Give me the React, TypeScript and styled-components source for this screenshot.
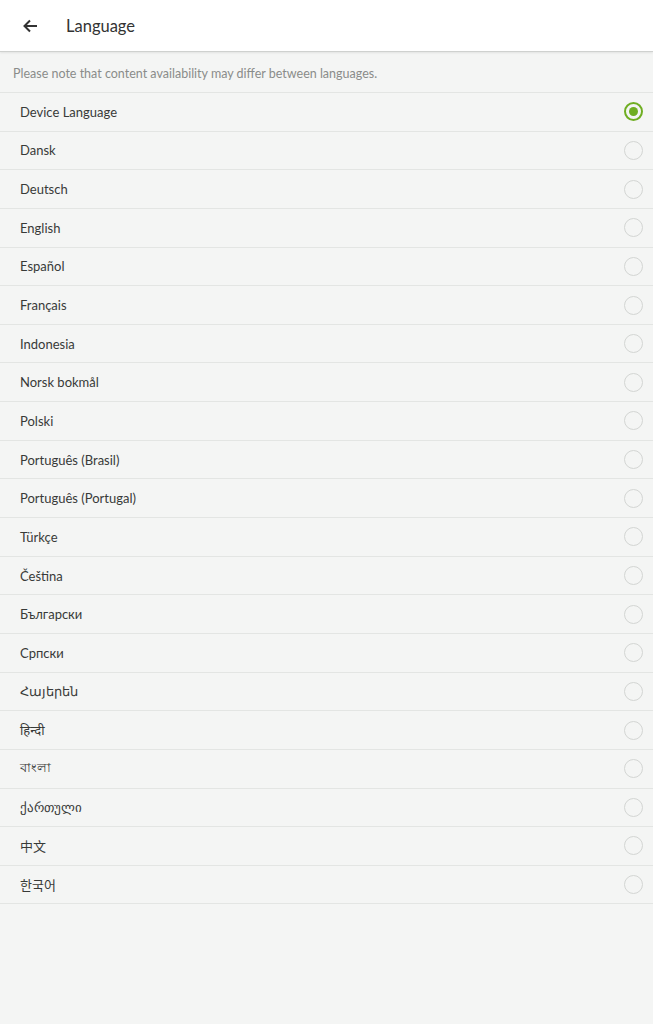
import React, { useState } from 'react'
import styled, { createGlobalStyle } from 'styled-components'

const languages = [
  'Device Language',
  'Dansk',
  'Deutsch',
  'English',
  'Español',
  'Français',
  'Indonesia',
  'Norsk bokmål',
  'Polski',
  'Português (Brasil)',
  'Português (Portugal)',
  'Türkçe',
  'Čeština',
  'Български',
  'Српски',
  'Հայերեն',
  'हिन्दी',
  'বাংলা',
  'ქართული',
  '中文',
  '한국어'
]

const Global = createGlobalStyle`
  html, body {
    margin: 0;
    background: #f4f5f4;
    font-family: Lato, "Noto Sans", "Noto Sans CJK SC", "Noto Sans CJK KR", sans-serif;
  }
`

const Page = styled.div`
  min-height: 1024px;
  background: #f4f5f4;
`

const Header = styled.header`
  height: 51px;
  display: flex;
  align-items: center;
  background: #fff;
  border-bottom: 1px solid #cfd1cf;
  box-shadow: 0 1px 2px rgba(0, 0, 0, 0.08);
`

const Back = styled.button`
  width: 60px;
  height: 51px;
  display: flex;
  align-items: center;
  justify-content: center;
  border: 0;
  background: none;
  padding: 0;
  margin-right: 6px;
  color: #333;
`

const Title = styled.h1`
  margin: 0;
  font-size: 16.5px;
  font-weight: 400;
  color: #333;
`

const Notice = styled.p`
  margin: 0;
  height: 41px;
  box-sizing: border-box;
  padding: 14px 13px 0;
  font-size: 12.5px;
  color: #8a8c8a;
  border-bottom: 1px solid #e3e5e3;
`

const List = styled.ul`
  list-style: none;
  margin: 0;
  padding: 0;
`

const Row = styled.li`
  height: 38.65px;
  box-sizing: border-box;
  display: flex;
  align-items: center;
  justify-content: space-between;
  padding: 0 10px 0 20px;
  border-bottom: 1px solid #e3e5e3;
  font-size: 13px;
  color: #383a38;
  cursor: pointer;
`

const Radio = styled.span<{ $on: boolean }>`
  width: 19px;
  height: 19px;
  box-sizing: border-box;
  border-radius: 50%;
  border: ${p => (p.$on ? '2px solid #6fae22' : '1.5px solid #d3d5d3')};
  display: flex;
  align-items: center;
  justify-content: center;
  &::after {
    content: '';
    width: 9px;
    height: 9px;
    border-radius: 50%;
    background: ${p => (p.$on ? '#6fae22' : 'transparent')};
  }
`

const App = () => {
  const [selected, setSelected] = useState(0)
  return (
    <Page>
      <Global />
      <Header>
        <Back aria-label='Back'>
          <svg width='16' height='16' viewBox='0 0 16 16' fill='none'>
            <path
              d='M15 8H2.5M8 2.5L2.5 8L8 13.5'
              stroke='#333'
              strokeWidth='2'
            />
          </svg>
        </Back>
        <Title>Language</Title>
      </Header>
      <Notice>Please note that content availability may differ between languages.</Notice>
      <List>
        {languages.map((l, i) => (
          <Row key={l} onClick={() => setSelected(i)}>
            {l}
            <Radio $on={i === selected} />
          </Row>
        ))}
      </List>
    </Page>
  )
}

export default App
